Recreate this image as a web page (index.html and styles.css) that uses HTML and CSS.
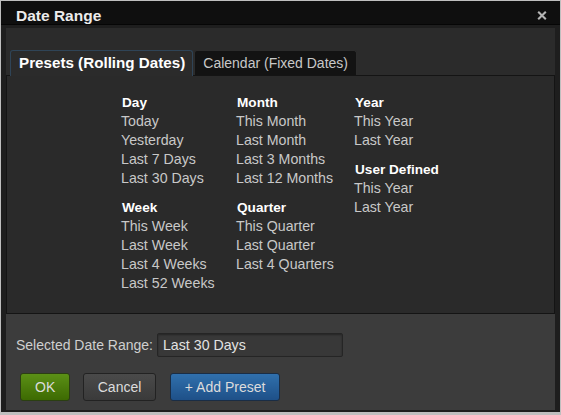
FILE: index.html
```html
<!DOCTYPE html>
<html>
<head>
<meta charset="utf-8">
<link rel="stylesheet" href="styles.css">
</head>
<body>
<div class="dialog">
  <div class="titlebar">
    <span class="title">Date Range</span>
    <span class="close"><svg width="10" height="9" viewBox="0 0 10 9"><path d="M1.2 0.8 L8.8 8.2 M8.8 0.8 L1.2 8.2" stroke="#b4b4b4" stroke-width="2.1" fill="none"/></svg></span>
  </div>
  <div class="body">
    <div class="top">
      <div class="tabs">
        <div class="tab active">Presets (Rolling Dates)</div>
        <div class="tab">Calendar (Fixed Dates)</div>
      </div>
      <div class="panel">
        <div class="columns">
          <div class="col col1">
            <div class="group">
              <div class="head">Day</div>
              <div class="item">Today</div>
              <div class="item">Yesterday</div>
              <div class="item">Last 7 Days</div>
              <div class="item">Last 30 Days</div>
            </div>
            <div class="group">
              <div class="head">Week</div>
              <div class="item">This Week</div>
              <div class="item">Last Week</div>
              <div class="item">Last 4 Weeks</div>
              <div class="item">Last 52 Weeks</div>
            </div>
          </div>
          <div class="col col2">
            <div class="group">
              <div class="head">Month</div>
              <div class="item">This Month</div>
              <div class="item">Last Month</div>
              <div class="item">Last 3 Months</div>
              <div class="item">Last 12 Months</div>
            </div>
            <div class="group">
              <div class="head">Quarter</div>
              <div class="item">This Quarter</div>
              <div class="item">Last Quarter</div>
              <div class="item">Last 4 Quarters</div>
            </div>
          </div>
          <div class="col col3">
            <div class="group">
              <div class="head">Year</div>
              <div class="item">This Year</div>
              <div class="item">Last Year</div>
            </div>
            <div class="group">
              <div class="head">User Defined</div>
              <div class="item">This Year</div>
              <div class="item">Last Year</div>
            </div>
          </div>
        </div>
      </div>
    </div>
    <div class="bottom">
      <div class="field">
        <span class="label">Selected Date Range:</span>
        <input class="input" type="text" value="Last 30 Days">
      </div>
      <div class="buttons">
        <button class="btn btn-ok">OK</button>
        <button class="btn btn-cancel">Cancel</button>
        <button class="btn btn-add">+ Add Preset</button>
      </div>
    </div>
  </div>
</div>
</body>
</html>
```
FILE: styles.css
```css
html, body {
  margin: 0;
  padding: 0;
}
body {
  background: #bfbfbf;
  font-family: "Liberation Sans", Arial, sans-serif;
  width: 561px;
  height: 415px;
  overflow: hidden;
}
.dialog {
  margin: 1px 0 0 1px;
  width: 559px;
  height: 411px;
  background: #1e1e1e;
  display: flex;
  flex-direction: column;
}
.titlebar {
  height: 16px;
  padding: 7px 13px 0 15px;
  background: #0f0f0f;
  border-bottom: 1px solid #060606;
  display: flex;
  align-items: center;
  justify-content: space-between;
}
.title {
  color: #ececec;
  font-weight: bold;
  font-size: 15.5px;
  line-height: 16px;
}
.close {
  display: flex;
  margin-top: -2px;
}
.body {
  flex: 1;
  padding: 3px 5px 2px 5px;
  display: flex;
  flex-direction: column;
}
.top {
  background: #2b2b2b;
  padding-top: 21px;
}
.tabs {
  display: flex;
  align-items: flex-end;
  height: 27px;
  margin-bottom: -1px;
  padding-left: 4px;
  position: relative;
  z-index: 1;
}
.tab {
  height: 24px;
  line-height: 24px;
  padding: 0 8px;
  font-size: 14px;
  color: #c8c8c8;
  background: #131313;
  border: 1px solid #2c2c2c;
  border-bottom: none;
  border-radius: 3px 3px 0 0;
  margin-left: 1px;
  margin-bottom: 1px;
  white-space: nowrap;
}
.tab.active {
  height: 25px;
  margin: 0;
  padding: 0 7px 0 8px;
  color: #ffffff;
  font-weight: bold;
  font-size: 15.2px;
  background: #2b2b2b;
  border-color: #2f4457;
}
.panel {
  height: 239px;
  box-sizing: border-box;
  border: 1px solid #141414;
  background: #2a2a2a;
  padding: 17px 0 0 114px;
}
.columns {
  display: flex;
}
.col1 { width: 115px; }
.col2 { width: 118px; }
.group {
  margin-bottom: 9.5px;
}
.head {
  color: #ffffff;
  font-weight: bold;
  font-size: 13.6px;
  line-height: 19px;
  padding-left: 1px;
}
.item {
  color: #c8c8c8;
  font-size: 14.2px;
  line-height: 19px;
}
.bottom {
  flex: 1;
  background: #3c3c3c;
  padding: 19px 0 0 10px;
}
.field {
  display: flex;
  align-items: center;
}
.label {
  color: #cfcfcf;
  font-size: 14px;
}
.input {
  margin: 0 0 0 4px;
  width: 186px;
  height: 24px;
  box-sizing: border-box;
  background: #383838;
  border: 1px solid #252525;
  border-radius: 2px;
  box-shadow: inset 0 1px 2px rgba(0, 0, 0, 0.35);
  color: #e2e2e2;
  font-family: "Liberation Sans", Arial, sans-serif;
  font-size: 14.2px;
  padding: 0 5px;
  outline: none;
}
.buttons {
  display: flex;
  gap: 13px;
  margin-top: 16px;
  padding-left: 4px;
}
.btn {
  height: 28px;
  padding: 0 14px;
  font-family: "Liberation Sans", Arial, sans-serif;
  font-size: 14px;
  color: #dcdcdc;
  border-radius: 3px;
  border: 1px solid #222;
  cursor: pointer;
}
.btn-ok {
  background: linear-gradient(#5b9016, #3d6a02);
  border-color: #2b3f12;
}
.btn-cancel {
  padding: 0 13.5px;
  background: linear-gradient(#4a4a4a, #3a3a3a);
  border-color: #222;
}
.btn-add {
  margin-left: 1px;
  background: linear-gradient(#3070ad, #1e5088);
  border-color: #1a2d45;
}
```
